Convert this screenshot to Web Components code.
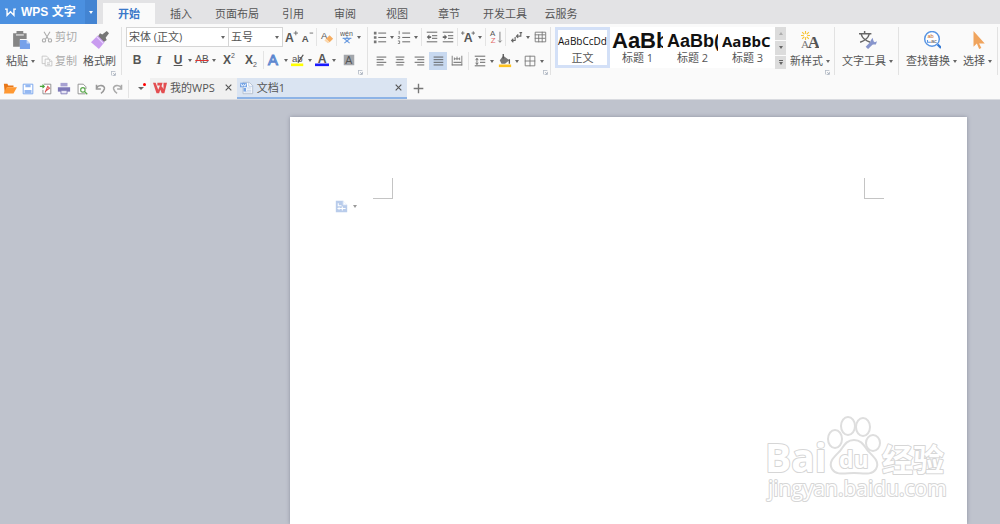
<!DOCTYPE html>
<html lang="zh-CN">
<head>
<meta charset="utf-8">
<title>WPS 文字</title>
<style>
    html, body { height: 100%; margin: 0; }
    body {
        font: 11px/16px "Open Sans", "Noto Sans CJK SC", sans-serif;
        color: #555;
        background: #bfc3cd;
        overflow: hidden;
    }
</style>
</head>
<body>
<wps-app></wps-app>

<script>
const T = (x, y, size, text, extra = '') =>
    `<text x="${x}" y="${y}" font-size="${size}" font-family="Liberation Sans, sans-serif" fill="currentColor" ${extra}>${text}</text>`

const lines = (list) => `<path d="${list.map(([x, y, w]) => `M${x} ${y}.5h${w}`).join('')}" stroke="currentColor" fill="none"/>`

// all icons are drawn on a 16x16 grid
const ICONS = {
    logo: '<path d="M0 3h3v9l5-5 5 5V3h3" fill="none" stroke="#fff" stroke-width="2"/>',
    paste: '<path d="M1 2h3V0h6v2h3v5H7v7H1z" fill="#858585"/><path d="M3.5 3.5h7" stroke="#eee"/><path d="M7 8h6l3 3v5H7z" fill="#76a1ea"/><path d="M13 8v3h3z" fill="#c3d6f8"/>',
    cut: '<g fill="none" stroke="#aaa" stroke-width="1.4"><path d="M4 1l6 10M12 1L6 11"/><circle cx="4" cy="12.5" r="2.2"/><circle cx="12" cy="12.5" r="2.2"/></g>',
    copy: '<g fill="#fafafa" stroke="#bbb"><path d="M1.5 1.5h6l2 2v8h-8z"/><path d="M5.5 5.5h6l3 3v6h-9z"/><path d="M11.5 5.5v3h3M8 10.5h4M8 12.5h4"/></g>',
    brush: '<path d="M14 0l2 2-3 4 1 2-3 2-5-5 2-3 2 1z" fill="#777"/><path d="M6 4l6 6-5 6-7-6z" fill="#c99cf0"/><path d="M5 5l6 6" stroke="#eadafa"/>',
    growFont: T(1, 14, 14, 'A', 'font-weight="bold"') + '<path d="M11 3.5h5M13.5 1v5" stroke="#666"/>',
    shrinkFont: T(2, 14, 11, 'A', 'font-weight="bold"') + '<path d="M11 3.5h4" stroke="#666"/>',
    eraser: T(1, 10, 11, 'A') + '<path d="M11 6l4 4-4 4-4-4z" fill="#f5ad61"/><path d="M7 10l4 4-2 1-4-3z" fill="#fbd7ad"/>',
    pinyin: T(0, 7, 8, 'wén') + '<path d="M8 7v2M3 9.5h10M5 10l6 5M11 10l-6 5" fill="none" stroke="#6c9ce0" stroke-width="1.3"/>',
    outlineA: T(1, 14, 17, 'A', 'style="fill:#fff;stroke:#5b86cf;stroke-width:1.2"'),
    highlight: T(1, 10, 11, 'ab') + '<path d="M8 11l6-9" stroke="#555" stroke-width="1.5"/><path d="M0 12h14v3H0z" fill="#ff0"/>',
    fontColor: T(3, 11, 14, 'A', 'font-weight="bold"') + '<path d="M0 12h16v3H0z" fill="#1a1aff"/>',
    shadeA: '<path d="M1 1h14v14H1z" fill="#a3a6ab"/>' + T(3, 13, 14, 'A'),
    bullets: lines([[6, 3, 9], [6, 8, 9], [6, 13, 9]]) + '<path d="M1 2h3v3H1zM1 7h3v3H1zM1 12h3v3H1z" fill="#777"/>',
    numbers: lines([[6, 3, 9], [6, 8, 9], [6, 13, 9]]) + '<path d="M2.5 1v4M1 7.5h2v2H1M1 12.5h2v3H1" fill="none" stroke="#777"/>',
    outdent: lines([[2, 2, 12], [8, 6, 6], [8, 9, 6], [2, 13, 12]]) + '<path d="M2 8l3-3v2h2v2H5v2z" fill="#666"/>',
    indent: lines([[2, 2, 12], [8, 6, 6], [8, 9, 6], [2, 13, 12]]) + '<path d="M7 8L4 5v2H2v2h2v2z" fill="#666"/>',
    scaleA: T(3, 14, 14, 'A', 'font-weight="bold"') + '<path d="M0 3.5h4M2 1.5v4M12 3.5h4M14 1.5v4" stroke="#666"/>',
    sort: T(1, 7, 9, 'A') + T(2, 15, 9, 'Z', 'style="fill:#e26a6a"') + '<path d="M12.5 2v12M10.5 12l2 2 2-2" fill="none" stroke="#777"/>',
    marks: '<path d="M13.500 3v4H9M10.500 5l-2 2 2 2M7 8v4H3M5 10l-2 2 2 2M12 3h3" fill="none" stroke="#666" stroke-width="1.3"/>',
    grid: '<path d="M2.5 2.5h12v11h-12zM2 5.5h12M2 9.5h12M6.5 5v9M10.5 2v12" fill="none" stroke="#777"/>',
    left: lines([[3, 3, 11], [3, 6, 8], [3, 9, 11], [3, 12, 8]]),
    center: lines([[3, 3, 10], [4, 6, 8], [3, 9, 10], [4, 12, 8]]),
    right: lines([[3, 3, 11], [6, 6, 8], [3, 9, 11], [6, 12, 8]]),
    justify: lines([[3, 3, 11], [3, 6, 11], [3, 9, 11], [3, 12, 11]]),
    distribute: lines([[4, 9, 9], [2, 12, 12]]) + '<path d="M2.5 2v11M13.500 2v11M5 5.5h6M5 4v3M8 3v4M11 4v3" fill="none" stroke="#777"/>',
    lineSpace: lines([[2, 2, 12], [8, 6, 6], [8, 9, 6], [2, 13, 12]]) + '<path d="M4.5 5v7M3 7l1.5-2L6 7M3 10l1.5 2L6 10" fill="none" stroke="#666"/>',
    fill: '<path d="M6 2l7 5-5 4H4L2 7z" fill="#777"/><path d="M6 0v5M13 6v5" stroke="#555" stroke-width="1.5"/><path d="M1 12h14v3H1z" fill="#ffc31f"/>',
    border: '<path d="M2.5 2.5h11v11h-11zM2 8h12M8 2v12" fill="none" stroke="#777"/>',
    newStyle: T(0, 15, 10, 'A', 'style="font-family:Liberation Serif;fill:#777"') + T(6, 15, 15, 'A', 'style="font-family:Liberation Serif;font-weight:bold"') + '<path d="M4 0v8M0 4h8M1 1l6 6M7 1L1 7" stroke="#f8c436"/><circle cx="4" cy="4" r="1.5" fill="#fff"/>',
    textTool: '<path d="M5 0v2M0 2.5h11M2 3c1 4 5 6 8 7M9 3c-1 4-5 6-8 7" fill="none" stroke="#666" stroke-width="1.3"/><path d="M7 15l5-5" stroke="#8795cc" stroke-width="3"/><path d="M12 6l-2 3 2 3h3l1-3-2 1-1-1z" fill="#8795cc"/>',
    find: '<circle cx="8" cy="7" r="6.5" fill="#fff" stroke="#5794e3" stroke-width="1.3"/><path d="M13 12l3 3" stroke="#3479d4" stroke-width="2"/>' + T(4, 6, 5, 'ab', 'style="fill:#c66a28"') + T(7, 11, 5, 'ac') + '<path d="M4 8v2h3" fill="none" stroke="#5794e3"/>',
    select: '<path d="M4 0v14l3-3 2 5 2-1-2-4h5z" fill="#f0a45d"/>',
    open: '<path d="M1 2h4l1 2h6v2H5l-3 7z" fill="#e87718"/><path d="M4 6h12l-4 7H1z" fill="#ff9933"/>',
    save: '<path d="M2.5 2.5h11v11h-11z" fill="#fff" stroke="#6d9eec"/><path d="M5 3h6v3H5zM4 9h8v4H4z" fill="#94b8f2"/>',
    pdf: '<path d="M5.5 2.5h8v11h-9V9" fill="#fff" stroke="#888"/><path d="M1 5h5M4 3l2 2-2 2" fill="none" stroke="#4aa53c" stroke-width="1.3"/><path d="M7 12l3-7 2 2-4 3" fill="none" stroke="#df5555" stroke-width="1.3"/>',
    print: '<path d="M4 1h8v4H4z" fill="#a7a1d2"/><path d="M1 6h14v5H1z" fill="#7e79b8"/><path d="M4.5 9.5h7v4h-7z" fill="#e6e4f4" stroke="#7e79b8"/>',
    preview: '<path d="M12 13.5H3.5v-11h6l3 3V8" fill="#fff" stroke="#888"/><circle cx="9" cy="9" r="2.5" fill="#fff" stroke="#5aa74b" stroke-width="1.3"/><path d="M11 11l3 3" stroke="#5aa74b" stroke-width="1.5"/>',
    undo: '<path d="M4 3v5h5M4 7c3-5 10-3 9 1-1 3-2 4-4 5" fill="none" stroke="#999" stroke-width="1.8"/>',
    redo: '<path d="M12 3v5H7M12 7C9 2 2 4 3 8c1 3 2 4 4 5" fill="none" stroke="#aaa" stroke-width="1.8"/>',
    wps: '<path d="M0 2h3l3 8 2-5H5V2h6l-4 12H4zM12 2h4l-3 12h-3L8 9l2-3 2 3z" fill="#e34d50"/>',
    doc: '<path d="M3.5 1.5h7l4 4v9h-11z" fill="#fff" stroke="#aebacb"/><path d="M10 1v5h5M8 8h5M8 10.5h5M5 12.5h8" fill="none" stroke="#b4c8e6"/><path d="M0 2h8v5H0zM4 8h3v4H4z" fill="#76a4e5"/><path d="M1 3l1.5 3L4 4l1.500 2L7 3" fill="none" stroke="#fff"/>',
    tag: '<path d="M1 1h9l5 5v9H1z" fill="#b9cceb"/><path d="M10 1v5h5" fill="#fff" stroke="#dbe6f6"/><path d="M4 4v3h4M3 10.5h10M5 9v3M9 8v5" fill="none" stroke="#fff" stroke-width="1.3"/>',
    launcher: '<path d="M1 14V1h13M5 14h9V6M7 7l6 6" fill="none" stroke="#8993a5" stroke-width="2"/>',
    close: '<path d="M3 3l10 10M13 3L3 13" stroke="#555" stroke-width="2"/>',
    plus: '<path d="M8 1v14M1 8h14" stroke="#777" stroke-width="2"/>'
}

const svg = (name, size = 16) => `<svg class="icon" viewBox="0 0 16 16" width="${size}" height="${size}" aria-hidden="true">${ICONS[name]}</svg>`

const BASE = `
    * { box-sizing: border-box; }
    button, select { font: inherit; color: inherit; background: none; border: 0; padding: 0; margin: 0; }
    svg { display: block; flex: none; }
    .caret { flex: none; width: 0; height: 0; border: 2px solid transparent; border-top: 3px solid #666; border-bottom: 0; }
`

class BaseElement extends HTMLElement {
    connectedCallback() {
        if (this.shadowRoot) { return }
        this.attachShadow({mode: 'open'}).innerHTML = `<style>${BASE}</style>` + this.render()
    }
    attr(name, fallback = '') { return this.hasAttribute(name) ? this.getAttribute(name) : fallback }
}

// small button: icon or short text, with an optional drop-down arrow
customElements.define('tool-button', class extends BaseElement {
    render() {
        const icon = this.attr('icon')
        return `
            <style>
                :host { display: block; flex: none; }
                button { display: flex; align-items: center; width: 16px; height: 18px; }
                .face { flex: 1; display: flex; justify-content: center; }
                .caret { margin: 0 2px; }
                :host([menu]) button { width: 24px; }
                :host([size="m"]) button { width: 18px; }
                :host([size="l"]) button { width: 22px; }
                :host([active]) button { background: #c8d9f0; }
            </style>
            <button title="${this.attr('label')}" aria-label="${this.attr('label')}">
                <span class="face">${icon ? svg(icon, +this.attr('px', 14)) : '<slot></slot>'}</span>
                ${this.hasAttribute('menu') ? '<span class="caret"></span>' : ''}
            </button>`
    }
})

// icon above its label
customElements.define('big-button', class extends BaseElement {
    render() {
        return `
            <style>
                :host { display: block; flex: none; }
                button { display: flex; flex-direction: column; align-items: center; gap: 4px; padding-top: 4px; }
                .label { display: flex; align-items: center; gap: 3px; white-space: nowrap; }
            </style>
            <button>${svg(this.attr('icon'), 18)}
                <span class="label"><slot></slot>${this.hasAttribute('menu') ? '<span class="caret"></span>' : ''}</span>
            </button>`
    }
})

customElements.define('side-button', class extends BaseElement {
    render() {
        return `
            <style>
                :host { display: block; }
                button { display: flex; align-items: center; gap: 2px; height: 20px; color: #aaa; white-space: nowrap; }
            </style>
            <button disabled>${svg(this.attr('icon'), 12)}<slot></slot></button>`
    }
})

customElements.define('tool-sep', class extends BaseElement {
    render() {
        return `<style>:host { display: block; flex: none; width: 1px; height: 18px; margin: 0 2px 0 1px; background: #e4e4e4; }</style>`
    }
})

customElements.define('combo-box', class extends BaseElement {
    render() {
        return `
            <style>
                :host { display: grid; align-items: center; border: 1px solid #d5d5d5; background: #fff; height: 20px; }
                select, .caret { grid-area: 1 / 1; }
                select { appearance: none; width: 100%; padding-left: 2px; }
                .caret { justify-self: end; margin-right: 3px; pointer-events: none; }
            </style>
            <select aria-label="${this.attr('label')}"><option>${this.attr('value')}</option></select>
            <span class="caret"></span>`
    }
})

customElements.define('ribbon-group', class extends BaseElement {
    render() {
        return `
            <style>
                :host { display: flex; flex-direction: column; flex: none; height: 48px; padding: 0 4px; border-right: 1px solid #e2e2e2; }
                :host([wide]) { padding: 0 5px 0 6px; }
                :host([roomy]) { padding: 0 5px 0 7px; }
                :host([tight]) { padding: 0 2px 0 4px; }
                .content { display: flex; gap: 4px; }
                :host([wide]) .content, :host([roomy]) .content { gap: 6px; }
                :host([rows]) .content { flex-direction: column; gap: 3px; }
                .launcher { align-self: flex-end; margin-top: auto; }
            </style>
            <div class="content"><slot></slot></div>
            ${this.hasAttribute('launcher') ? `<button class="launcher" aria-label="${this.attr('launcher')}">${svg('launcher', 5)}</button>` : ''}`
    }
})

customElements.define('tool-row', class extends BaseElement {
    render() {
        return `
            <style>
                :host { display: flex; align-items: center; height: 20px; }
                :host([spaced]) { gap: 1px; padding-top: 2px; }
            </style><slot></slot>`
    }
})

customElements.define('style-item', class extends BaseElement {
    render() {
        return `
            <style>
                :host { display: block; flex: none; width: 55px; height: 41px; }
                button { display: flex; flex-direction: column; align-items: center; width: 100%; height: 100%; padding: 3px 2px; background: #fff; }
                :host([active]) button { box-shadow: inset 0 0 0 3px #d3e0f7; }
                .preview { width: 100%; height: 22px; line-height: 22px; overflow: hidden; white-space: nowrap; color: #111; font-size: 10px; }
                :host([level]) .preview { font-weight: bold; text-align: left; }
                :host([level="1"]) .preview { font-family: "Liberation Sans", sans-serif; font-size: 22px; }
                :host([level="2"]) .preview { font-family: "Liberation Sans", sans-serif; font-size: 18px; }
                :host([level="3"]) .preview { font-size: 15px; }
                .name { line-height: 14px; }
            </style>
            <button><span class="preview">${this.attr('sample')}</span><span class="name"><slot></slot></span></button>`
    }
})

customElements.define('style-gallery', class extends BaseElement {
    render() {
        return `
            <style>
                :host { display: flex; }
                .scroll { display: flex; flex-direction: column; gap: 1px; width: 11px; }
                .scroll button { flex: 1; display: flex; align-items: center; justify-content: center; background: #dcdcdc; }
                .up { transform: rotate(180deg); opacity: .4; }
                .more { flex-direction: column; gap: 1px; }
                .more::before { content: ""; width: 4px; height: 1px; background: #666; }
            </style>
            <slot></slot>
            <div class="scroll">
                <button aria-label="向上"><span class="caret up"></span></button>
                <button aria-label="向下"><span class="caret"></span></button>
                <button class="more" aria-label="更多样式"><span class="caret"></span></button>
            </div>`
    }
})

customElements.define('menu-bar', class extends BaseElement {
    render() {
        const tabs = ['开始', '插入', '页面布局', '引用', '审阅', '视图', '章节', '开发工具', '云服务']
        return `
            <style>
                :host { display: flex; height: 24px; background: #e3e3e5; }
                .brand { display: flex; align-items: center; width: 97px; margin-right: 6px; background: #4b90e0; color: #fff; font: bold 12px/16px "Liberation Sans", "Noto Sans CJK SC", sans-serif; }
                .brand button:first-child { flex: 1; display: flex; align-items: center; gap: 5px; padding-left: 5px; white-space: nowrap; }
                .arrow { display: flex; align-items: center; justify-content: center; width: 12px; height: 100%; background: #4384d2; }
                .arrow .caret { border-top-color: #fff; }
                nav { display: flex; padding-top: 3px; }
                nav button { min-width: 52px; padding: 0 8px; white-space: nowrap; }
                nav button[aria-selected=true] { background: #fafafa; color: #3a78c9; font-weight: bold; }
            </style>
            <div class="brand">
                <button>${svg('logo', 11)}WPS 文字</button>
                <button class="arrow" aria-label="菜单"><span class="caret"></span></button>
            </div>
            <nav role="tablist">
                ${tabs.map((t, i) => `<button role="tab" aria-selected="${i === 0}">${t}</button>`).join('')}
            </nav>`
    }
})

customElements.define('ribbon-bar', class extends BaseElement {
    render() {
        return `
            <style>
                :host { display: flex; padding: 3px 0; height: 54px; background: #fafafa; }
                .stack { display: flex; flex-direction: column; gap: 4px; }
                b, i, u, s, sup, sub { font-family: "Liberation Sans", sans-serif; font-size: 12px; }
                .mark { font-weight: bold; }
                i { font-family: "Liberation Serif", serif; font-weight: bold; font-size: 13px; }
                s { font-size: 10px; text-decoration-color: #d33; }
                sup, sub { font-size: 7px; line-height: 1; }
                sub { align-self: flex-end; }
                .font { width: 103px; }
                .size { width: 54px; border-left: 0; }
            </style>
            <ribbon-group wide launcher="剪贴板">
                <big-button icon="paste" menu>粘贴</big-button>
                <div class="stack">
                    <side-button icon="cut">剪切</side-button>
                    <side-button icon="copy">复制</side-button>
                </div>
                <big-button icon="brush">格式刷</big-button>
            </ribbon-group>

            <ribbon-group rows launcher="字体">
                <tool-row>
                    <combo-box class="font" label="字体" value="宋体 (正文)"></combo-box>
                    <combo-box class="size" label="字号" value="五号"></combo-box>
                    <tool-button icon="growFont" label="增大字号"></tool-button>
                    <tool-button icon="shrinkFont" label="减小字号"></tool-button>
                    <tool-sep></tool-sep>
                    <tool-button icon="eraser" label="清除格式"></tool-button>
                    <tool-sep></tool-sep>
                    <tool-button icon="pinyin" label="拼音指南" menu></tool-button>
                </tool-row>
                <tool-row>
                    <tool-button label="加粗" size="l"><b>B</b></tool-button>
                    <tool-button label="倾斜" size="l"><i>I</i></tool-button>
                    <tool-button label="下划线" menu><u class="mark">U</u></tool-button>
                    <tool-button label="删除线" menu><s>AB</s></tool-button>
                    <tool-button label="上标" size="l"><b>X</b><sup>2</sup></tool-button>
                    <tool-button label="下标" size="l"><b>X</b><sub>2</sub></tool-button>
                    <tool-sep></tool-sep>
                    <tool-button icon="outlineA" label="文字效果" menu></tool-button>
                    <tool-button icon="highlight" label="突出显示" menu></tool-button>
                    <tool-button icon="fontColor" label="字体颜色" menu></tool-button>
                    <tool-button icon="shadeA" label="字符底纹" size="l" px="12"></tool-button>
                </tool-row>
            </ribbon-group>

            <ribbon-group rows tight launcher="段落">
                <tool-row>
                    <tool-button icon="bullets" label="项目符号" menu></tool-button>
                    <tool-button icon="numbers" label="编号" menu></tool-button>
                    <tool-sep></tool-sep>
                    <tool-button icon="outdent" label="减少缩进"></tool-button>
                    <tool-button icon="indent" label="增加缩进"></tool-button>
                    <tool-sep></tool-sep>
                    <tool-button icon="scaleA" label="中文版式" menu></tool-button>
                    <tool-sep></tool-sep>
                    <tool-button icon="sort" label="排序"></tool-button>
                    <tool-sep></tool-sep>
                    <tool-button icon="marks" label="显示标记" menu></tool-button>
                    <tool-button icon="grid" label="插入表格"></tool-button>
                </tool-row>
                <tool-row spaced>
                    <tool-button icon="left" label="左对齐" size="m"></tool-button>
                    <tool-button icon="center" label="居中" size="m"></tool-button>
                    <tool-button icon="right" label="右对齐" size="m"></tool-button>
                    <tool-button icon="justify" label="两端对齐" size="m" active></tool-button>
                    <tool-button icon="distribute" label="分散对齐" size="m"></tool-button>
                    <tool-sep></tool-sep>
                    <tool-button icon="lineSpace" label="行距" menu></tool-button>
                    <tool-button icon="fill" label="底纹" menu></tool-button>
                    <tool-button icon="border" label="边框" menu></tool-button>
                </tool-row>
            </ribbon-group>

            <ribbon-group launcher="样式">
                <style-gallery>
                    <style-item sample="AaBbCcDd" active>正文</style-item>
                    <style-item sample="AaBb" level="1">标题 1</style-item>
                    <style-item sample="AaBb(" level="2">标题 2</style-item>
                    <style-item sample="AaBbC" level="3">标题 3</style-item>
                </style-gallery>
                <big-button icon="newStyle" menu>新样式</big-button>
            </ribbon-group>

            <ribbon-group roomy>
                <big-button icon="textTool" menu>文字工具</big-button>
            </ribbon-group>

            <ribbon-group roomy>
                <big-button icon="find" menu>查找替换</big-button>
                <big-button icon="select" menu>选择</big-button>
            </ribbon-group>`
    }
})

customElements.define('doc-tab', class extends BaseElement {
    render() {
        return `
            <style>
                :host { display: flex; align-items: center; background: #f0f0f0; padding: 0 3px; border-bottom: 2px solid transparent; }
                :host([active]) { background: #dae4f2; border-bottom-color: #8db3e6; width: 170px; }
                .name { flex: 1; display: flex; align-items: center; gap: 3px; white-space: nowrap; }
                .close { padding: 1px; margin-left: 8px; }
            </style>
            <button class="name" role="tab">${svg(this.attr('icon'), 14)}<slot></slot></button>
            <button class="close" aria-label="关闭">${svg('close', 9)}</button>`
    }
})

customElements.define('quick-bar', class extends BaseElement {
    render() {
        return `
            <style>
                :host { display: flex; height: 22px; padding-left: 1px; background: #fafafa; border-bottom: 1px solid #d9dbe0; }
                .tools { display: flex; align-items: center; }
                .more { position: relative; display: flex; align-items: center; justify-content: center; width: 19px; }
                .more .caret { border-width: 3px 3px 0; }
                .dot { position: absolute; top: 5px; right: 4px; width: 3px; height: 3px; border-radius: 50%; background: #f00; }
                .add { padding: 0 6px; }
            </style>
            <div class="tools">
                <tool-button icon="open" label="打开" size="m"></tool-button>
                <tool-button icon="save" label="保存" size="m"></tool-button>
                <tool-button icon="pdf" label="输出为PDF" size="m"></tool-button>
                <tool-button icon="print" label="打印" size="m"></tool-button>
                <tool-button icon="preview" label="打印预览" size="m"></tool-button>
                <tool-button icon="undo" label="撤销" size="m"></tool-button>
                <tool-button icon="redo" label="恢复" size="m"></tool-button>
                <tool-sep></tool-sep>
            </div>
            <button class="more" aria-label="自定义"><span class="caret"></span><span class="dot"></span></button>
            <doc-tab icon="wps">我的WPS</doc-tab>
            <doc-tab icon="doc" active>文档1</doc-tab>
            <button class="add" aria-label="新建">${svg('plus', 11)}</button>`
    }
})

customElements.define('site-watermark', class extends BaseElement {
    render() {
        return `
            <style>
                :host { display: block; width: 184px; }
                text { font-family: "Open Sans", "Noto Sans CJK SC", sans-serif; paint-order: stroke; }
                .edge { fill: #fff; stroke: #d6d6d6; stroke-width: 2px; stroke-linejoin: round; }
                .pad { fill: #fff; stroke: #dedede; stroke-width: 2px; }
            </style>
            <svg viewBox="0 0 184 92" width="184" height="92">
                <text class="edge" x="1" y="58" font-size="39" font-weight="bold">Bai</text>
                <text class="edge" x="118" y="57" font-size="31" font-weight="bold">经验</text>
                <g class="pad">
                    <ellipse cx="71" cy="25" rx="7" ry="9"/>
                    <ellipse cx="84" cy="12" rx="7" ry="9"/>
                    <ellipse cx="99" cy="13" rx="7" ry="9"/>
                    <ellipse cx="109" cy="29" rx="7" ry="8"/>
                    <path d="M90 26c-8 0-10 6-14 11-6 6-12 11-8 18 4 7 14 4 22 4s18 3 22-4c4-7-2-12-8-18-4-5-6-11-14-11z"/>
                </g>
                <text class="edge" x="75" y="54" font-size="23" font-weight="bold">du</text>
                <text class="edge" x="4" y="82" font-size="21">jingyan.baidu.com</text>
            </svg>`
    }
})

customElements.define('doc-page', class extends BaseElement {
    render() {
        return `
            <style>
                :host { position: relative; display: block; flex: 1; padding-top: 61px; background: #fff; box-shadow: 0 0 4px #8d91a0; }
                .margins { display: flex; justify-content: space-between; margin: 0 83px; }
                .corner { width: 20px; height: 21px; border: 1px solid #c4c4c4; border-top: 0; }
                .corner.start { border-left: 0; }
                .corner.end { border-right: 0; }
                .tag { display: flex; align-items: center; gap: 5px; margin: 1px 0 0 45px; }
                .tag .caret { border-top-color: #999; }
                site-watermark { position: absolute; right: 19px; bottom: 18px; }
            </style>
            <div class="margins"><span class="corner start"></span><span class="corner end"></span></div>
            <button class="tag" aria-label="文档选项">${svg('tag', 13)}<span class="caret"></span></button>
            <site-watermark></site-watermark>`
    }
})

customElements.define('wps-app', class extends BaseElement {
    render() {
        return `
            <style>
                :host { display: flex; flex-direction: column; height: 100vh; }
                main { flex: 1; display: flex; padding: 17px 33px 0 29%; background: #bfc3cd; }
            </style>
            <menu-bar></menu-bar>
            <ribbon-bar></ribbon-bar>
            <quick-bar></quick-bar>
            <main><doc-page></doc-page></main>`
    }
})
</script>
</body>
</html>
